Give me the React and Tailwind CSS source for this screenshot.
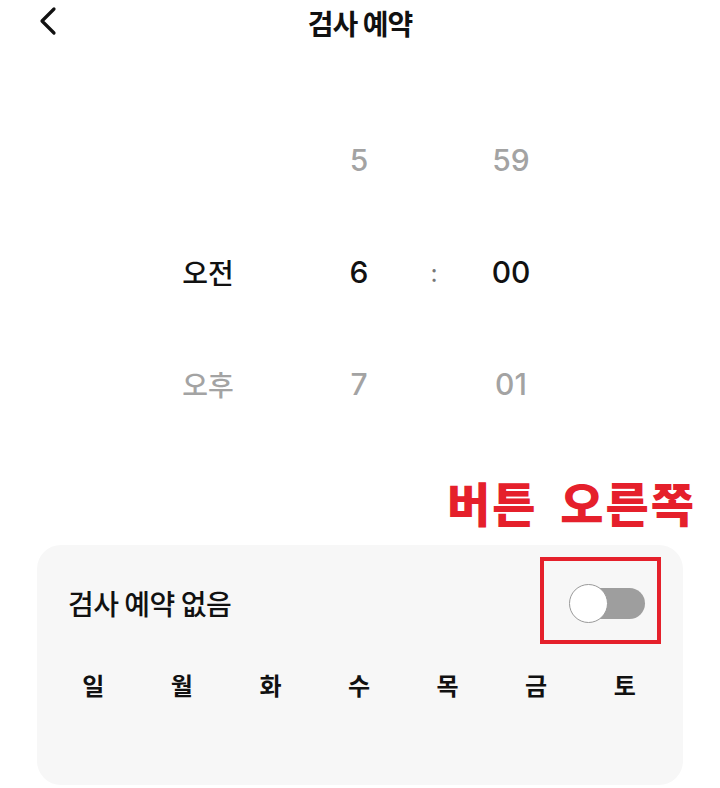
import React, { useState } from "react";

const font = { fontFamily: '"Noto Sans CJK KR", "Noto Sans", sans-serif' };
const digits = { fontFamily: 'Inter, "Noto Sans CJK KR", sans-serif' };

const days = ["일", "월", "화", "수", "목", "금", "토"];

const rows = [
  { ampm: "", hour: "5", min: "59", active: false },
  { ampm: "오전", hour: "6", min: "00", active: true },
  { ampm: "오후", hour: "7", min: "01", active: false },
];

const ChevronLeft = () => (
  <svg width="20" height="30" viewBox="0 0 20 30" fill="none">
    <path d="M16 3 L4 15 L16 27" stroke="#111" strokeWidth="3.2" strokeLinecap="round" strokeLinejoin="round" />
  </svg>
);

export default function App() {
  const [enabled, setEnabled] = useState(false);

  return (
    <div className="w-[720px] h-[788px] bg-white overflow-hidden relative" style={font}>
      {/* header */}
      <div className="h-[46px] flex items-center relative">
        <button className="absolute left-[38px] top-[6px]">
          <ChevronLeft />
        </button>
        <h1 className="w-full text-center text-[28px] font-bold text-[#111] tracking-[-1px] leading-none">
          검사 예약
        </h1>
      </div>

      {/* time wheel */}
      <div className="mt-[58px] flex flex-col">
        {rows.map((r, i) => {
          const tone = r.active ? "text-[#111] font-medium" : "text-[#a3a3a3] font-medium";
          return (
            <div key={i} className="h-[112px] flex items-center leading-none">
              <span className="w-[152px]" />
              <span className={`w-[112px] text-center text-[28px] ${tone}`}>{r.ampm}</span>
              <span className="w-[56px]" />
              <span className={`w-[78px] text-center text-[30px] ${tone}`} style={digits}>{r.hour}</span>
              <span className="w-[17px]" />
              <span className="w-[38px] text-center text-[#777] text-[24px]">{r.active ? ":" : ""}</span>
              <span className="w-[1px]" />
              <span className={`w-[114px] text-center text-[30px] ${tone}`} style={digits}>{r.min}</span>
            </div>
          );
        })}
      </div>

      {/* annotation */}
      <div className="mt-[38px] pr-[24px] text-right text-[47px] font-black text-[#e5202b] leading-none tracking-[2px] [word-spacing:10px]">
        버튼 오른쪽
      </div>

      {/* schedule card */}
      <div className="mx-[37px] mt-[20px] h-[240px] rounded-[24px] bg-[#f7f7f7] px-[31px] pt-[38px]">
        <div className="flex items-center justify-between h-[40px]">
          <span className="text-[28px] font-medium text-[#111] tracking-[-0.5px]">검사 예약 없음</span>
          <div className="relative mr-[7px]">
            <button
              onClick={() => setEnabled(!enabled)}
              className="relative w-[76px] h-[40px] flex items-center"
            >
              <span className="absolute left-[16px] right-0 h-[31px] rounded-full bg-[#9e9e9e]" />
              <span className="relative w-[39px] h-[39px] rounded-full bg-white border-[1.5px] border-[#9a9a9a]" />
            </button>
            <div className="absolute -left-[29px] -top-[26px] w-[121px] h-[87px] border-[4px] border-[#e5202b]" />
          </div>
        </div>
        <div className="mt-[50px] grid grid-cols-7 -ml-[19px] -mr-[17px]">
          {days.map((d) => (
            <span key={d} className="text-center text-[24px] font-bold text-[#111] leading-none">
              {d}
            </span>
          ))}
        </div>
      </div>
    </div>
  );
}
